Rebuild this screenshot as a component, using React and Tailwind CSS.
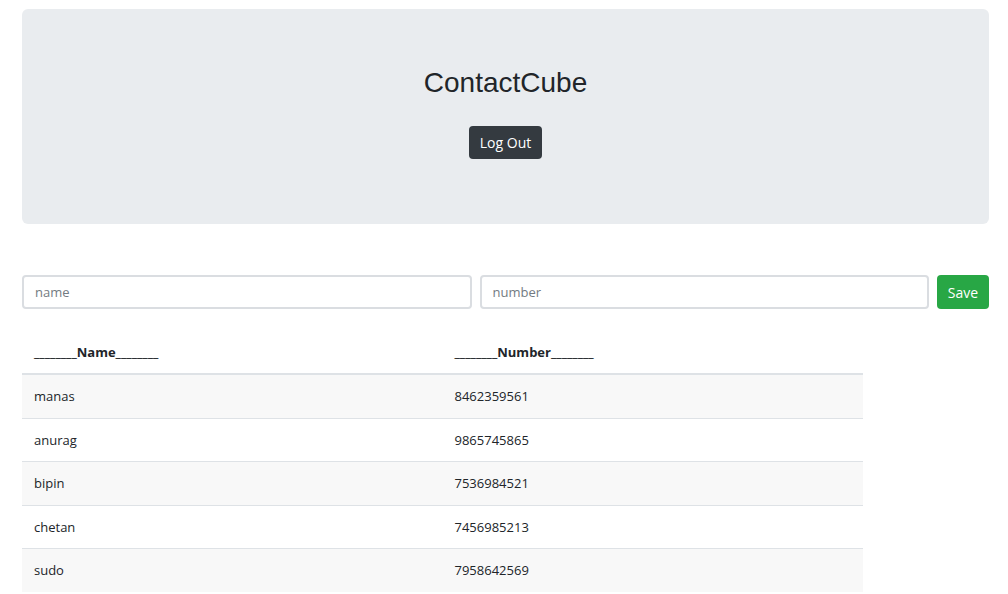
import { useState } from 'react';

const CONTACTS = [
  { name: 'manas', number: '8462359561' },
  { name: 'anurag', number: '9865745865' },
  { name: 'bipin', number: '7536984521' },
  { name: 'chetan', number: '7456985213' },
  { name: 'sudo', number: '7958642569' },
];

export default function App() {
  const [name, setName] = useState('');
  const [number, setNumber] = useState('');

  return (
    <div className="min-h-[594px] bg-white pl-[22px] pr-[19px] pt-[9px] text-[#212529]" style={{ fontFamily: '"Open Sans", "Noto Sans", sans-serif' }}>
      <div className="flex h-[215px] flex-col items-center rounded-[6px] bg-[#e9ecef] pt-[57px]">
        <h1 className="text-[28px] leading-[34px] font-normal text-[#212529]" style={{ fontFamily: '"Liberation Sans", Arial, sans-serif' }}>
          ContactCube
        </h1>
        <button className="mt-[26px] h-[33px] rounded-[4px] bg-[#343a40] px-[11px] text-[14px] text-white">
          Log Out
        </button>
      </div>

      <div className="mt-[51px] flex gap-[8px]">
        <input
          value={name}
          onChange={(e) => setName(e.target.value)}
          placeholder="name"
          className="h-[34px] flex-1 rounded-[4px] border-2 border-[#dadde1] px-[11px] text-[13px] placeholder:text-[#737b82] outline-none"
        />
        <input
          value={number}
          onChange={(e) => setNumber(e.target.value)}
          placeholder="number"
          className="h-[34px] flex-1 rounded-[4px] border-2 border-[#dadde1] px-[11px] text-[13px] placeholder:text-[#737b82] outline-none"
        />
        <button className="h-[34px] w-[52px] rounded-[4px] bg-[#28a745] text-[14px] text-white">Save</button>
      </div>

      <table className="mt-[21px] w-[841px] border-collapse text-[14px]">
        <thead>
          <tr>
            <th className="w-1/2 border-b-2 border-[#dee2e6] px-[12px] pb-[11px] pt-[12px] text-left text-[13px] leading-5 font-bold">________Name________</th>
            <th className="w-1/2 border-b-2 border-[#dee2e6] px-[12px] pb-[11px] pt-[12px] text-left text-[13px] leading-5 font-bold">________Number________</th>
          </tr>
        </thead>
        <tbody>
          {CONTACTS.map((c, i) => (
            <tr key={c.name} className={i % 2 === 0 ? 'bg-[#f8f8f8]' : 'bg-white'}>
              <td className={`px-[12px] py-[11px] leading-[20.5px] text-[13px] ${i > 0 ? 'border-t border-[#dee2e6]' : ''}`}>{c.name}</td>
              <td className={`px-[12px] py-[11px] leading-[20.5px] text-[13px] ${i > 0 ? 'border-t border-[#dee2e6]' : ''}`}>{c.number}</td>
            </tr>
          ))}
        </tbody>
      </table>
    </div>
  );
}
